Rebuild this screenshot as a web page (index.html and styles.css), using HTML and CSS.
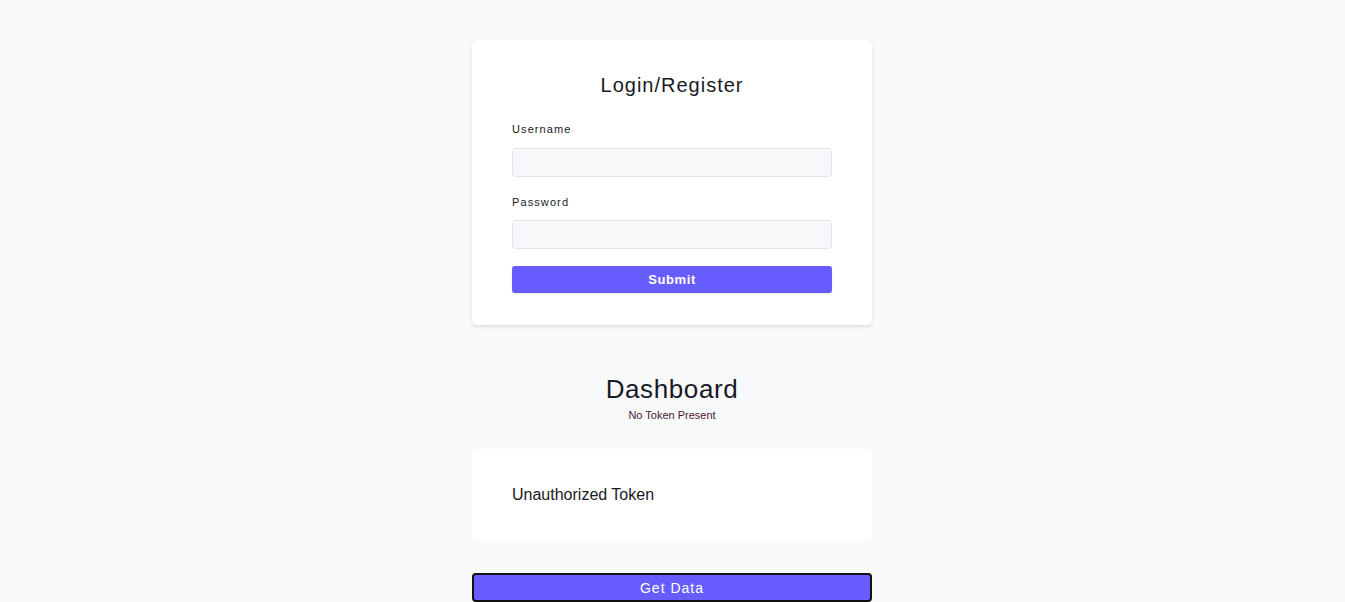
FILE: index.html
```html
<!DOCTYPE html>
<html>
<head>
<meta charset="utf-8">
<link rel="stylesheet" href="styles.css">
</head>
<body>
<main class="page">
  <section class="card login">
    <h2 class="login-title">Login/Register</h2>
    <label class="field-label">Username</label>
    <input class="field-input" type="text">
    <label class="field-label field-label-pw">Password</label>
    <input class="field-input" type="password">
    <button class="submit-btn">Submit</button>
  </section>
  <section class="dashboard">
    <h1 class="dash-title">Dashboard</h1>
    <p class="dash-status">No Token Present</p>
  </section>
  <section class="card result">
    <p class="result-text">Unauthorized Token</p>
  </section>
  <button class="data-btn">Get Data</button>
</main>
</body>
</html>
```
FILE: styles.css
```css
* { box-sizing: border-box; }
html, body { margin: 0; padding: 0; }
body {
  background: #f8f9fb;
  font-family: "Liberation Sans", Arial, sans-serif;
  color: #1a1a24;
  padding-right: 1px;
}
.page {
  width: 400px;
  margin: 0 auto;
  padding-top: 40px;
  display: flex;
  flex-direction: column;
}
.card {
  background: #fff;
  border-radius: 6px;
}
.login {
  padding: 33px 40px 32px;
  display: flex;
  flex-direction: column;
  box-shadow: 0 2px 4px rgba(20, 30, 60, 0.12);
  height: 285px;
}
.login-title {
  margin: 0 0 25px;
  font-size: 20px;
  font-weight: normal;
  text-align: center;
  letter-spacing: 1px;
  line-height: 24px;
}
.field-label {
  font-size: 11px;
  letter-spacing: 1.1px;
  line-height: 14px;
  margin-bottom: 12px;
}
.field-label-pw { margin-bottom: 11px; }
.field-input {
  height: 29px;
  border: 1px solid #e2e5ef;
  border-radius: 4px;
  background: #f7f8fa;
  margin: 0 0 18px;
  font: inherit;
}
.submit-btn {
  height: 27px;
  margin-top: -1px;
  border: none;
  border-radius: 3px;
  background: #675dff;
  color: #fff;
  font-family: "Liberation Sans", Arial, sans-serif;
  font-size: 13px;
  font-weight: bold;
  letter-spacing: 0.6px;
  box-shadow: 0 1px 2px rgba(0,0,0,0.1);
}
.dashboard {
  margin-top: 49px;
  text-align: center;
}
.dash-title {
  margin: 0;
  font-size: 26px;
  font-weight: normal;
  letter-spacing: 0.6px;
  line-height: 30px;
}
.dash-status {
  margin: 4px 0 0;
  font-size: 11px;
  line-height: 14px;
  color: #4a1838;
}
.result {
  margin-top: 27px;
  height: 92px;
  padding: 0 40px;
  display: flex;
  align-items: center;
}
.result-text {
  margin: 0;
  font-size: 16px;
}
.data-btn {
  margin-top: 32px;
  height: 29px;
  border: 2px solid #111;
  border-radius: 4px;
  background: #675dff;
  color: #fff;
  font-family: "Liberation Sans", Arial, sans-serif;
  font-size: 14px;
  letter-spacing: 1px;
}
```
